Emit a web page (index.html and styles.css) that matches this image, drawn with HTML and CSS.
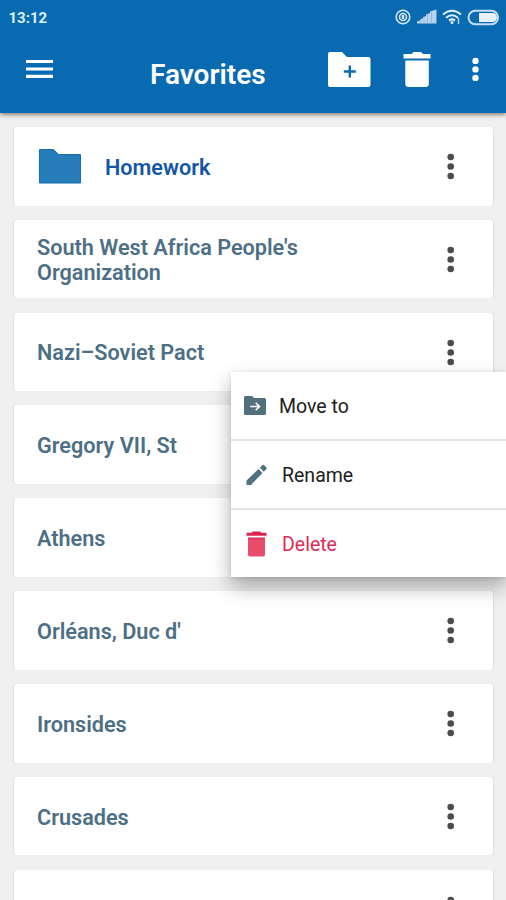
FILE: index.html
```html
<!DOCTYPE html>
<html lang="en">
<head>
<meta charset="utf-8">
<title>Favorites</title>
<link rel="stylesheet" href="styles.css">
</head>
<body>
<svg class="defs" width="0" height="0">
  <symbol id="dots" viewBox="0 0 8 28"><circle cx="3.700" cy="5" r="3.300"/><circle cx="3.700" cy="14.500" r="3.300"/><circle cx="3.700" cy="24" r="3.300"/></symbol>
</svg>
<header class="header">
  <div class="status">
    <span class="time">13:12</span>
    <svg class="status-icons" width="106" height="18" viewBox="0 0 106 18">
      <g fill="none" stroke="#d3e5f7">
        <circle cx="8" cy="9" r="6.800" stroke-width="1.600"/>
        <circle cx="8" cy="9" r="3.500" stroke-width="1.500"/>
      </g>
      <path d="M6.700 7h2.600v4H6.700z" fill="#d3e5f7"/>
      <path d="M22 15.500v-2l3-1v-1.200l3-1V9l3-1V6.500l4-1.500V3.500L41.500 1.500v14z" fill="#b7d2ed"/>
      <path d="M25.500 11v5M29 9v7M32.500 6.500v9M36.500 4v12" stroke="#78a9d6" stroke-width=".6"/>
      <g fill="none" stroke="#e2effc" stroke-width="2">
        <path d="M48 6.500q9-7.500 18 0M51 9.700q6-5 12 0M54 12.600q3-2.400 6 0"/>
      </g>
      <circle cx="57" cy="14.500" r="1.500" fill="#e2effc"/>
      <path d="M63.500 10v6" stroke="#b7d2ed" stroke-width="1.500"/>
      <rect x="73.500" y="2.800" width="29.600" height="13.400" rx="6.700" fill="none" stroke="#c7def5" stroke-width="2"/>
      <path d="M84 5h13.500a4.500 4.500 0 0 1 0 9H84z" fill="#e6f1fd"/>
    </svg>
  </div>
  <div class="toolbar">
    <svg class="menu-icon" width="27" height="20" viewBox="0 0 27 20"><path d="M0 2.500h27M0 10h27M0 17.300h27" stroke="#fff" stroke-width="3.200"/></svg>
    <h1 class="title">Favorites</h1>
    <svg class="add-folder" width="43" height="36" viewBox="0 0 43 36"><path d="M2 0h12l5 5h21.500a2 2 0 0 1 2 2v26a2 2 0 0 1-2 2H2a2 2 0 0 1-2-2V2a2 2 0 0 1 2-2z" fill="#fff"/><path d="M15.800 19.500h12M21.800 13.500v12" stroke="#086ab1" stroke-width="2.400"/></svg>
    <svg class="trash" width="28" height="36" viewBox="0 0 28 36"><path d="M.5 2h8l2-2h7.500l2 2h7.500v4.500H.5zM2.300 8.500h23.500v23.300a3.200 3.200 0 0 1-3.200 3.200H5.500a3.200 3.200 0 0 1-3.200-3.200z" fill="#fff"/></svg>
    <svg class="more" width="7" height="25" viewBox="0 0 7 25" fill="#fff"><circle cx="3.500" cy="3.900" r="3.200"/><circle cx="3.500" cy="12.400" r="3.200"/><circle cx="3.500" cy="20.900" r="3.200"/></svg>
  </div>
</header>
<main class="list">
  <article class="card folder">
    <svg class="folder-icon" width="42" height="35" viewBox="0 0 42 35"><path d="M.5.500h14l5 5h22v28.500H.5z" fill="#267db9" stroke="#166fae"/></svg>
    <span class="label">Homework</span><svg class="dots"><use href="#dots"/></svg>
  </article>
  <article class="card"><span class="label">South West Africa People's<br>Organization</span><svg class="dots"><use href="#dots"/></svg></article>
  <article class="card anchor">
    <span class="label">Nazi–Soviet Pact</span><svg class="dots"><use href="#dots"/></svg>
    <div class="menu">
      <div class="item move">
        <svg width="22" height="20" viewBox="0 0 22 20"><path d="M1.500 0H8l2 2h10.500q1.500 0 1.500 1.500v14q0 1.500-1.500 1.500h-19Q0 19 0 17.500v-16Q0 0 1.500 0z" fill="#526f7d"/><path d="M6.200 10.500h9M11.700 6.700l3.800 3.800-3.800 3.800" fill="none" stroke="#fff" stroke-width="1.600"/></svg>
        <span>Move to</span>
      </div>
      <div class="item">
        <svg width="22" height="22" viewBox="0 0 22 22"><path d="M.5 21v-4.500L12.500 5l4 4L5 21zM13.800 3.700l2.400-2.400q1-1 2 0l2 2q1 1 0 2l-2.400 2.400z" fill="#4f7180"/></svg>
        <span>Rename</span>
      </div>
      <div class="item delete">
        <svg width="22" height="26" viewBox="0 0 22 26"><path d="M2 7h17v16.500q0 2-2 2H4q-2 0-2-2z" fill="#e94b6a"/><path d="M.5 1.700h5L7 .5h7l1.500 1.200h5v3H.5z" fill="#d9234f"/><path d="M2 7h17" stroke="#d9234f"/></svg>
        <span>Delete</span>
      </div>
    </div>
  </article>
  <article class="card"><span class="label">Gregory VII, St</span><svg class="dots"><use href="#dots"/></svg></article>
  <article class="card"><span class="label">Athens</span><svg class="dots"><use href="#dots"/></svg></article>
  <article class="card"><span class="label">Orléans, Duc d'</span><svg class="dots"><use href="#dots"/></svg></article>
  <article class="card"><span class="label">Ironsides</span><svg class="dots"><use href="#dots"/></svg></article>
  <article class="card"><span class="label">Crusades</span><svg class="dots"><use href="#dots"/></svg></article>
  <article class="card"><span class="label"></span><svg class="dots"><use href="#dots"/></svg></article>
</main>
</body>
</html>
```
FILE: styles.css
```css
* { box-sizing: border-box; }
body {
  margin: 0;
  width: 506px;
  height: 900px;
  overflow: hidden;
  display: flex;
  flex-direction: column;
  background: #f0f0f0;
  font-family: Roboto, sans-serif;
}
svg { display: block; flex: none; }
.defs { display: none; }
.header {
  position: relative;
  z-index: 2;
  flex: none;
  height: 113px;
  background: #086ab1;
  color: #fff;
  box-shadow: 0 2px 4px rgba(60, 30, 20, .5);
}
.status {
  height: 34px;
  padding: 0 5px 0 8.500px;
  display: flex;
  justify-content: space-between;
  align-items: center;
}
.time { font-size: 15px; font-weight: 700; line-height: 20px; color: #dfefff; padding-top: 2px; }
.toolbar { display: flex; align-items: flex-start; height: 79px; }
.menu-icon { margin: 25px 0 0 26px; }
.title {
  margin: 26px 0 0 97px;
  width: 178px;
  font-size: 28px;
  font-weight: 600;
  line-height: 30px;
}
.add-folder { margin-top: 18px; }
.trash { margin: 18px 0 0 32px; }
.more { margin: 23px 0 0 41px; }
.list {
  flex: 1;
  min-height: 0;
  overflow: hidden;
  padding: 14px 13px 0 14px;
  display: flex;
  flex-direction: column;
  gap: 14.200px;
}
.card {
  height: 78.650px;
  flex: none;
  display: flex;
  align-items: center;
  justify-content: space-between;
  padding: 0 38px 0 23px;
  background: #fff;
  border-radius: 3px;
  box-shadow: -1px 0 1px rgba(0, 0, 0, .07), 1px 0 1px rgba(0, 0, 0, .07);
}
.label {
  font-size: 21.650px;
  font-weight: 600;
  line-height: 25px;
  color: #4d6f86;
  padding-top: 2px;
}
.folder { justify-content: flex-start; }
.folder .label { flex: 1; margin-left: 24.500px; color: #1556a5; }
.folder-icon { margin-left: 1.500px; margin-top: 1px; }
.dots { width: 8px; height: 28px; fill: #4b4b4b; }
.anchor { position: relative; z-index: 1; }
.menu {
  position: absolute;
  left: 217px;
  top: 59px;
  width: 275px;
  height: 205px;
  background: #fff;
  box-shadow: 0 10px 20px rgba(0, 0, 0, .3), 0 1px 4px rgba(0, 0, 0, .12);
  display: grid;
  grid-template-rows: 69px 69.500px 1fr;
}
.item {
  display: flex;
  align-items: center;
  gap: 14.500px;
  padding-left: 14.500px;
  padding-top: 1px;
  font-size: 19.500px;
  color: #202020;
  border-bottom: 2px solid #e4e4e4;
}
.item.move { padding-left: 13px; gap: 13px; }
.item span { padding-top: 2px; line-height: 24px; }
.item.delete { color: #e02b55; border-bottom: 0; }
```
